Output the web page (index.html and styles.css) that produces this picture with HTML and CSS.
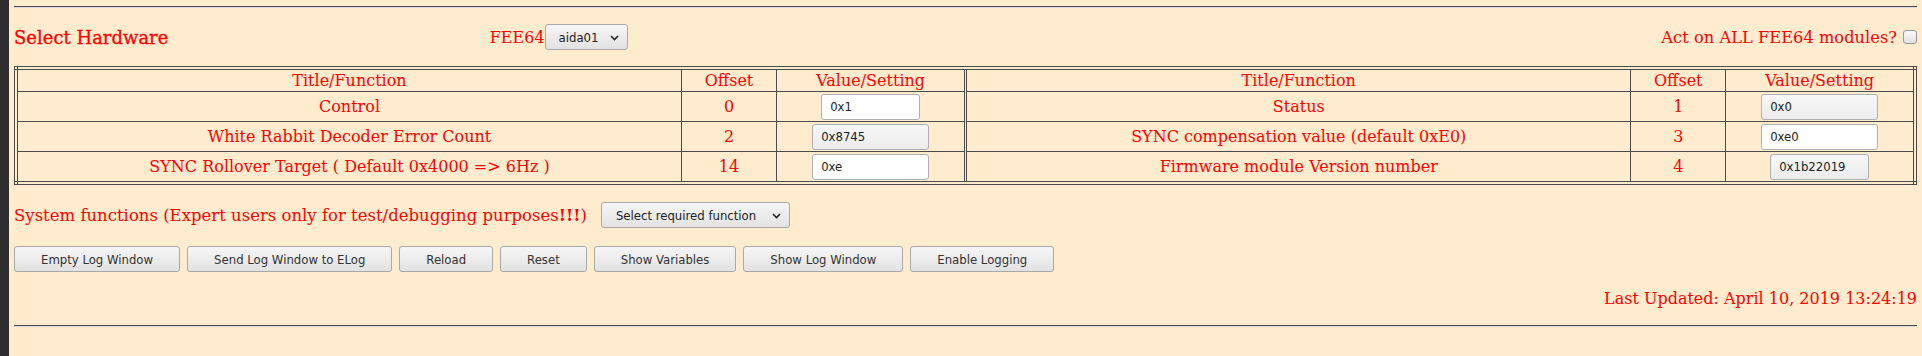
FILE: index.html
```html
<!DOCTYPE html>
<html lang="en">
<head>
    <meta charset="UTF-8">
    <title>FEE64 Registers</title>
    <link rel="stylesheet" href="styles.css">
</head>
<body>
    <div class="page">
        <hr>

        <div class="hw-row">
            <div class="hw-title">Select Hardware</div>
            <div class="hw-pick">
                FEE64<span class="dropdown">
                    <select id="module">
                        <option>aida01</option>
                        <option>aida02</option>
                    </select>
                    <svg class="chev" width="9" height="6" viewBox="0 0 9 6"><path d="M1 1 L4.5 4.5 L8 1" fill="none" stroke="#222" stroke-width="1.6"/></svg>
                </span>
            </div>
            <div></div>
            <div class="hw-all">Act on ALL FEE64 modules?<input type="checkbox" class="check"></div>
        </div>

        <table class="regs">
            <tr>
                <td class="c-title">Title/Function</td>
                <td class="c-off">Offset</td>
                <td class="c-val split">Value/Setting</td>
                <td class="c-title">Title/Function</td>
                <td class="c-off">Offset</td>
                <td class="c-val">Value/Setting</td>
            </tr>
            <tr>
                <td>Control</td>
                <td>0</td>
                <td class="split"><input class="reg short" value="0x1"></td>
                <td>Status</td>
                <td>1</td>
                <td><input class="reg ro" value="0x0" readonly></td>
            </tr>
            <tr>
                <td>White Rabbit Decoder Error Count</td>
                <td>2</td>
                <td class="split"><input class="reg ro" value="0x8745" readonly></td>
                <td>SYNC compensation value (default 0xE0)</td>
                <td>3</td>
                <td><input class="reg" value="0xe0"></td>
            </tr>
            <tr>
                <td>SYNC Rollover Target ( Default 0x4000 =&gt; 6Hz )</td>
                <td>14</td>
                <td class="split"><input class="reg" value="0xe"></td>
                <td>Firmware module Version number</td>
                <td>4</td>
                <td><input class="reg short ro" value="0x1b22019" readonly></td>
            </tr>
        </table>

        <div class="sys-row">
            <span class="sys-label">System functions (Expert users only for test/debugging purposes<b>!!!</b>)</span>
            <span class="dropdown">
                <select id="sysfunc">
                    <option>Select required function</option>
                </select>
                <svg class="chev" width="9" height="6" viewBox="0 0 9 6"><path d="M1 1 L4.5 4.5 L8 1" fill="none" stroke="#222" stroke-width="1.6"/></svg>
            </span>
        </div>

        <div class="btn-row">
            <button>Empty Log Window</button>
            <button>Send Log Window to ELog</button>
            <button>Reload</button>
            <button>Reset</button>
            <button>Show Variables</button>
            <button>Show Log Window</button>
            <button>Enable Logging</button>
        </div>

        <div class="updated">Last Updated: April 10, 2019 13:24:19</div>

        <hr>
    </div>
</body>
</html>
```

FILE: styles.css
```css
body {
    margin: 0;
    background-color: #ffebcd;
    border-left: 9px solid #2e2e2e;
    min-height: 356px;
    box-sizing: border-box;
    font-family: "DejaVu Serif", serif;
    font-size: 16px;
    color: #ff0000;
}
.page {
    padding: 6px 5px 0 5px;
}
hr {
    margin: 0;
    border: none;
    border-top: 1px solid #4b4b4b;
    border-bottom: 1px solid #d8d8d8;
}
.hw-row {
    display: grid;
    grid-template-columns: repeat(4, 1fr);
    align-items: center;
    height: 26px;
    margin: 16px 0;
}
.hw-title {
    font-size: 18px;
    -webkit-text-stroke: 0.3px #ff0000;
}
.hw-pick {
    display: flex;
    align-items: center;
}
.hw-all {
    display: flex;
    align-items: center;
    justify-content: flex-end;
    gap: 3px;
    font-size: 16.3px;
}
.dropdown {
    position: relative;
    display: inline-flex;
}
.dropdown .chev {
    position: absolute;
    right: 9px;
    top: 11px;
    pointer-events: none;
}
select, button, input {
    font-family: "DejaVu Sans", sans-serif;
    font-stretch: condensed;
    font-size: 13px;
    color: #222;
}
select {
    appearance: none;
    height: 26px;
    padding: 0 28px 0 13px;
    border: 1px solid #a8a8a8;
    border-radius: 3px;
    background: linear-gradient(#f6f6f6, #e2e2e2);
}
#sysfunc {
    padding-left: 14px;
    padding-right: 32px;
}
.check {
    appearance: none;
    width: 14px;
    height: 14px;
    margin: 0 0 0 3px;
    border: 1px solid #999;
    border-radius: 3px;
    background: linear-gradient(#fafafa, #e0e0e0);
}
.regs {
    width: 100%;
    border-collapse: collapse;
    border: 4px double #4b4b4b;
    table-layout: fixed;
}
.regs td {
    border: 1px solid #4b4b4b;
    text-align: center;
    height: 29px;
    padding: 0;
}
.regs tr:first-child td {
    height: 21px;
}
.regs td.split {
    border-right: 3px double #4b4b4b;
}
.c-title {
    width: 663px;
}
.c-off {
    width: 94px;
}
.reg {
    width: 117px;
    height: 26px;
    box-sizing: border-box;
    padding: 0 8px;
    border: 1px solid #b0b0b0;
    border-radius: 3px;
    background: #fff;
}
.reg.short {
    width: 99px;
}
.reg.ro {
    background: linear-gradient(#f8f8f8, #ececec);
}
.sys-row {
    display: flex;
    align-items: center;
    gap: 14px;
    margin-top: 17px;
}
.sys-label {
    font-size: 16.5px;
}
.btn-row {
    display: flex;
    gap: 7px;
    margin-top: 18px;
}
button {
    height: 26px;
    padding: 0 26px;
    border: 1px solid #a8a8a8;
    border-radius: 3px;
    background: linear-gradient(#f6f6f6, #e2e2e2);
    color: #333;
}
.updated {
    text-align: right;
    margin: 17px 0 17px;
}
```
